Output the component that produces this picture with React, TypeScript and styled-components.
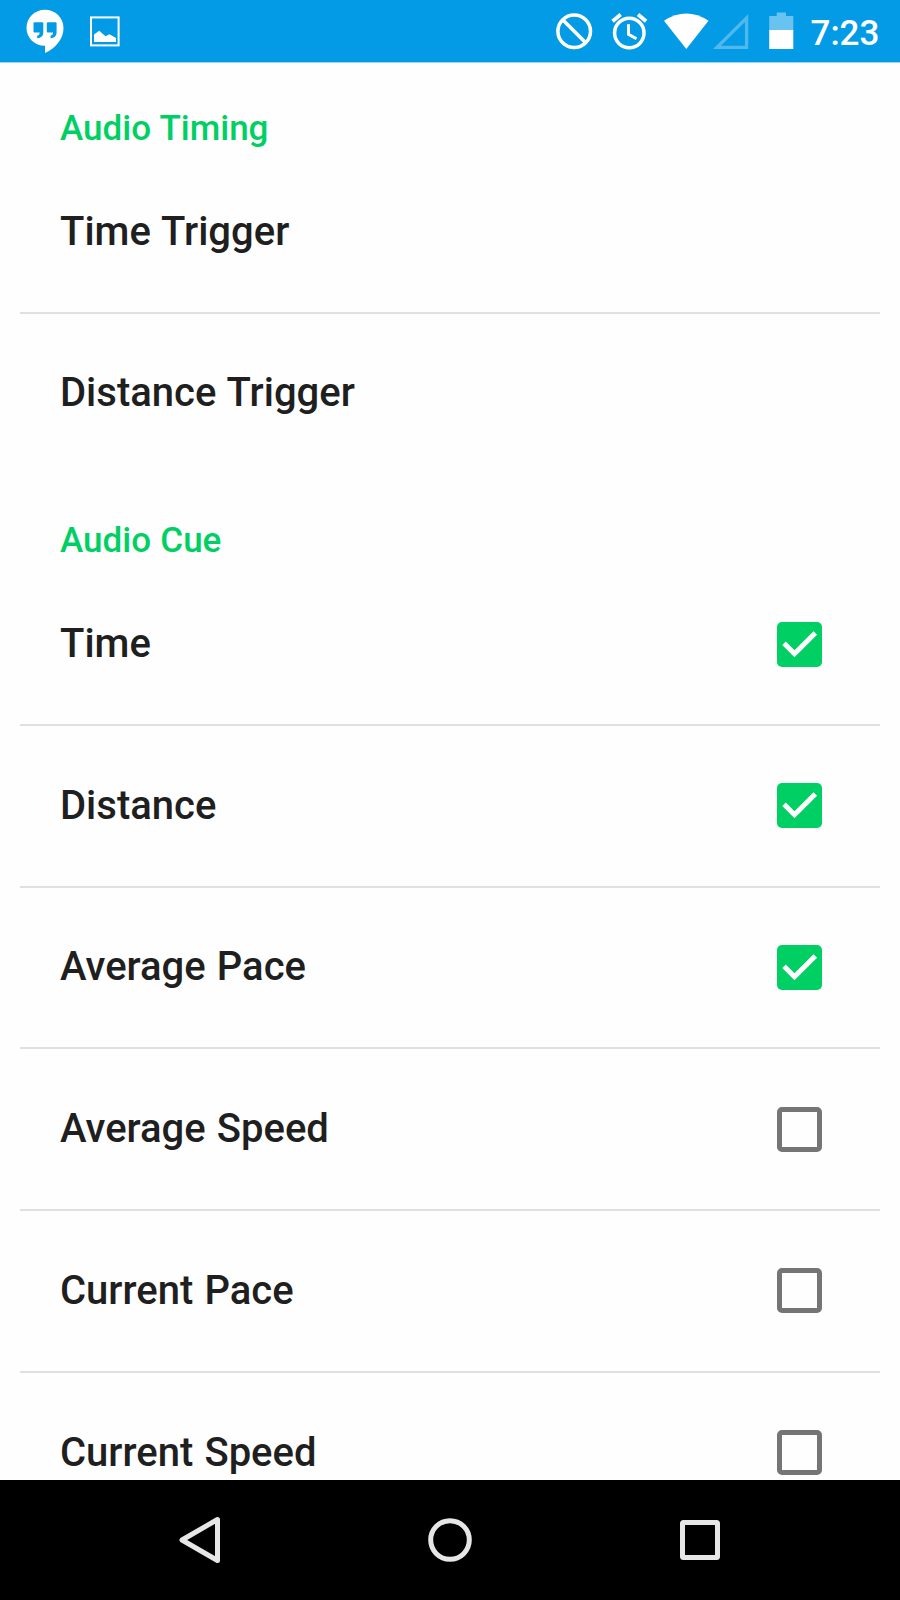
import React from "react";
import styled, { createGlobalStyle } from "styled-components";

const GlobalStyle = createGlobalStyle`
  * { box-sizing: border-box; }
  body { margin: 0; background: #fff; overflow: hidden; }
`;

const Screen = styled.div`
  display: flex;
  flex-direction: column;
  width: 900px;
  height: 1600px;
  overflow: hidden;
  background: #fefefe;
  font-family: Roboto, "Liberation Sans", sans-serif;
  font-weight: 500;
  -webkit-font-smoothing: antialiased;
`;

const StatusBar = styled.header`
  display: flex;
  flex: none;
  justify-content: space-between;
  height: 62.5px;
  padding: 0 21px 0 26px;
  background: linear-gradient(#039be6 62px, #9bd4f5 62px);
`;

const StatusGroup = styled.div<{ $gap?: number }>`
  display: flex;
  align-items: flex-start;
  gap: ${(p) => p.$gap ?? 0}px;
`;

const StatusIcon = styled.svg<{ $after?: number }>`
  display: block;
  flex: none;
  height: 62px;
  margin-right: ${(p) => p.$after ?? 0}px;
`;

const Clock = styled.span`
  width: 69px;
  padding-left: 0.5px;
  color: #fff;
  font-size: 35px;
  line-height: 68px;
`;

const Preferences = styled.main`
  flex: 1;
  min-height: 0;
  overflow: hidden;
`;

const Section = styled.section`
  padding-bottom: 1.67px;
`;

const SectionTitle = styled.h2`
  height: 89.17px;
  margin: 0;
  padding: 45.5px 60px 0;
  color: #00d063;
  font-size: 35px;
  font-weight: 500;
  line-height: 41px;
  word-spacing: 0.6px;
`;

const Row = styled.div`
  display: flex;
  align-items: center;
  justify-content: space-between;
  height: 160px;
  padding: 0 78px 0 60px;
`;

const RowTitle = styled.span`
  color: #1f1f1f;
  font-size: 40px;
  line-height: 48px;
  word-spacing: 1.2px;
`;

const Divider = styled.div`
  height: 2px;
  margin: 0 20px -0.33px;
  background: #e0e0e0;
`;

const CheckIcon = styled.svg`
  display: block;
  width: 45px;
  height: 45px;
`;

const NavBar = styled.nav`
  display: grid;
  grid-template-columns: repeat(3, 250px);
  flex: none;
  justify-content: center;
  align-items: center;
  justify-items: center;
  height: 120px;
  background: #000;
`;

const NavIcon = styled.svg`
  display: block;
  width: 50px;
  height: 50px;
  fill: none;
  stroke: #e6e6e6;
  stroke-width: 5;
  stroke-linejoin: round;
`;

function Checkbox({ checked }: { checked: boolean }) {
  return (
    <CheckIcon viewBox="0 0 45 45" role="checkbox" aria-checked={checked}>
      {checked ? (
        <>
          <rect width="45" height="45" rx="5" fill="#00d063" />
          <path d="M7 21.300 17.500 31.800 38.300 11" fill="none" stroke="#fff" strokeWidth="5" />
        </>
      ) : (
        <rect x="2.5" y="2.5" width="40" height="40" rx="2.5" fill="none" stroke="#757575" strokeWidth="5" />
      )}
    </CheckIcon>
  );
}

type Item = { title: string; checked?: boolean };

const sections: { title: string; items: Item[] }[] = [
  { title: "Audio Timing", items: [{ title: "Time Trigger" }, { title: "Distance Trigger" }] },
  {
    title: "Audio Cue",
    items: [
      { title: "Time", checked: true },
      { title: "Distance", checked: true },
      { title: "Average Pace", checked: true },
      { title: "Average Speed", checked: false },
      { title: "Current Pace", checked: false },
      { title: "Current Speed", checked: false },
    ],
  },
];

function Status() {
  return (
    <StatusBar>
      <StatusGroup $gap={26}>
        <StatusIcon width="38" viewBox="26 0 38 62" fill="#fff">
          <path
            fillRule="evenodd"
            d="M45 9.8C34.7 9.8 26.5 17.9 26.5 27.9S34.7 45.8 45 45.8V53C56 47.8 63.5 38.5 63.5 27.9 63.5 17.9 55.3 9.8 45 9.8ZM34.5 22.3H42.3Q43.3 22.3 43.3 23.3V32.5Q43.3 37.5 37.2 38.3V35.8Q39.8 35 39.8 32.5H34.5Q33.5 32.5 33.5 31.5V23.3Q33.5 22.3 34.5 22.3ZM47.8 22.3H55.6Q56.6 22.3 56.6 23.3V32.5Q56.6 37.5 50.5 38.3V35.8Q53.1 35 53.1 32.5H47.8Q46.8 32.5 46.8 31.5V23.3Q46.8 22.3 47.8 22.3Z"
          />
        </StatusIcon>
        <StatusIcon width="30" viewBox="90 0 30 62" fill="#fff">
          <rect x="91" y="17.400" width="27.600" height="28" fill="none" stroke="#fff" strokeWidth="2" />
          <path d="M94 42V34.500L99.200 30.800 105.500 36.300 109.500 34.300 116 38V42Z" />
        </StatusIcon>
      </StatusGroup>
      <StatusGroup>
        <StatusIcon width="37" $after={18} viewBox="556 0 37 62" fill="none" stroke="#fff" strokeWidth="3.500">
          <circle cx="574.200" cy="31.200" r="16.300" />
          <path d="M562.700 19.700 585.700 42.700" />
        </StatusIcon>
        <StatusIcon width="37" $after={15} viewBox="611 0 37 62" fill="none" stroke="#fff" strokeWidth="3.500">
          <circle cx="629.300" cy="33" r="14.700" />
          <path d="M628.500 24.300V34.300L636.500 38.800" strokeWidth="3" />
          <path d="M612.600 21.300 620.700 14.500M638 14.500 646.100 21.300" strokeWidth="3.800" />
        </StatusIcon>
        <StatusIcon width="46" $after={3} viewBox="663 0 46 62" fill="#fff">
          <path d="M664 20.700Q686.200 6.300 708.500 20.700L686.300 49Z" />
        </StatusIcon>
        <StatusIcon width="37" $after={20} viewBox="712 0 37 62" fill="none" stroke="#4fb9ed" strokeWidth="3.300">
          <path d="M717 47.300H746.600V18Z" />
        </StatusIcon>
        <StatusIcon width="25" $after={16} viewBox="769 0 25 62">
          <path d="M769.200 30.200V16H776.700V12.600H786V16H793.300V30.200Z" fill="#68c3f0" />
          <path d="M769.200 30H793.300V49H769.200Z" fill="#fff" />
        </StatusIcon>
        <Clock>7:23</Clock>
      </StatusGroup>
    </StatusBar>
  );
}

export default function App() {
  return (
    <>
      <GlobalStyle />
      <Screen>
        <Status />
        <Preferences>
          {sections.map((section) => (
            <Section key={section.title}>
              <SectionTitle>{section.title}</SectionTitle>
              {section.items.map((item, i) => (
                <React.Fragment key={item.title}>
                  {i > 0 && <Divider />}
                  <Row>
                    <RowTitle>{item.title}</RowTitle>
                    {item.checked !== undefined && <Checkbox checked={item.checked} />}
                  </Row>
                </React.Fragment>
              ))}
            </Section>
          ))}
        </Preferences>
        <NavBar>
          <NavIcon viewBox="0 0 50 50">
            <path d="M7 25 42.500 4.500V45.500Z" />
          </NavIcon>
          <NavIcon viewBox="0 0 50 50">
            <circle cx="25" cy="25" r="19.300" />
          </NavIcon>
          <NavIcon viewBox="0 0 50 50">
            <rect x="7.500" y="7.500" width="35" height="35" rx="1" />
          </NavIcon>
        </NavBar>
      </Screen>
    </>
  );
}
